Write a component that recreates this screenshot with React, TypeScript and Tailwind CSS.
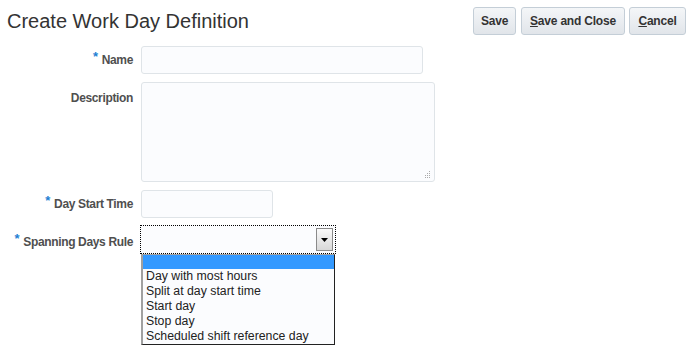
import React from "react";

function Req() {
  return <span className="text-[#1e7fd3] mr-1 relative -top-[3px] text-[13px]">*</span>;
}

const btn =
  "h-[28px] rounded-[3px] border border-[#c4ced7] bg-gradient-to-b from-[#f4f6f8] to-[#e1e5ea] text-[12px] font-bold text-[#333] tracking-[-0.2px]";

export default function App() {
  const options = [
    "Day with most hours",
    "Split at day start time",
    "Start day",
    "Stop day",
    "Scheduled shift reference day",
  ];

  return (
    <div className="w-[694px] h-[353px] bg-white relative font-['Liberation_Sans',Arial,sans-serif] text-[#333]">
      {/* header */}
      <div className="flex items-start justify-between pl-[7px] pr-[8px] pt-[7px]">
        <h1 className="text-[20px] leading-[28px] text-[#333]">Create Work Day Definition</h1>
        <div className="flex">
          <button className={btn + " w-[43px]"}>Save</button>
          <button className={btn + " w-[104px] ml-[5px]"}>
            <span className="underline">S</span>ave and Close
          </button>
          <button className={btn + " w-[57px] ml-[4px]"}>
            <span className="underline">C</span>ancel
          </button>
        </div>
      </div>

      {/* form */}
      <div className="flex flex-col mt-[11px] text-[12px] font-bold text-[#4f4f4f] tracking-[-0.35px]">
        <div className="flex items-center">
          <div className="w-[134px] text-right pr-[1px]">
            <Req />Name
          </div>
          <div className="ml-[7px] w-[282px] h-[28px] rounded-[3px] border border-[#dfe4e8] bg-[#fbfcfe]" />
        </div>

        <div className="flex items-start mt-[8px]">
          <div className="w-[134px] text-right pr-[1px] pt-[7px]">Description</div>
          <div className="ml-[7px] w-[294px] h-[100px] rounded-[3px] border border-[#dfe4e8] bg-[#fbfcfe] relative">
            <svg className="absolute right-[3px] bottom-[3px]" width="7" height="7" viewBox="0 0 7 7">
              <rect x="5" y="0" width="1" height="1" fill="#aaa" />
              <rect x="3" y="2" width="1" height="1" fill="#aaa" />
              <rect x="5" y="2" width="1" height="1" fill="#aaa" />
              <rect x="1" y="4" width="1" height="1" fill="#aaa" />
              <rect x="3" y="4" width="1" height="1" fill="#aaa" />
              <rect x="5" y="4" width="1" height="1" fill="#aaa" />
              <rect x="1" y="6" width="1" height="1" fill="#aaa" />
              <rect x="3" y="6" width="1" height="1" fill="#aaa" />
              <rect x="5" y="6" width="1" height="1" fill="#aaa" />
            </svg>
          </div>
        </div>

        <div className="flex items-center mt-[8px]">
          <div className="w-[134px] text-right pr-[1px]">
            <Req />Day Start Time
          </div>
          <div className="ml-[7px] w-[132px] h-[28px] rounded-[3px] border border-[#dfe4e8] bg-[#fbfcfe]" />
        </div>

        <div className="flex items-start mt-[7px]">
          <div className="w-[134px] text-right pr-[1px] pt-[7px]">
            <Req />Spanning Days Rule
          </div>
          <div className="ml-[6px] flex flex-col">
            <div className="w-[196px] h-[29px] border border-dotted border-black p-[2px] flex justify-end bg-[#fbfcfe]">
              <div className="w-[17px] h-[23px] border border-[#8a8a8a] bg-gradient-to-b from-[#fafafa] to-[#d8d8d8] flex items-center justify-center">
                <svg width="7" height="4" viewBox="0 0 7 4">
                  <polygon points="0,0 7,0 3.5,4" fill="#000" />
                </svg>
              </div>
            </div>
            <div className="ml-[1px] w-[194px] border-l-2 border-t border-l-[#a0a0a0] border-t-[#a0a0a0] border-r border-b border-r-[#222] border-b-[#222] bg-[#fbfcfe] font-normal text-[12.3px] tracking-normal text-[#222]">
              <div className="h-[14px] bg-[#3399ff]" />
              {options.map((o) => (
                <div key={o} className="leading-[15px] pl-[3px]">
                  {o}
                </div>
              ))}
            </div>
          </div>
        </div>
      </div>
    </div>
  );
}
